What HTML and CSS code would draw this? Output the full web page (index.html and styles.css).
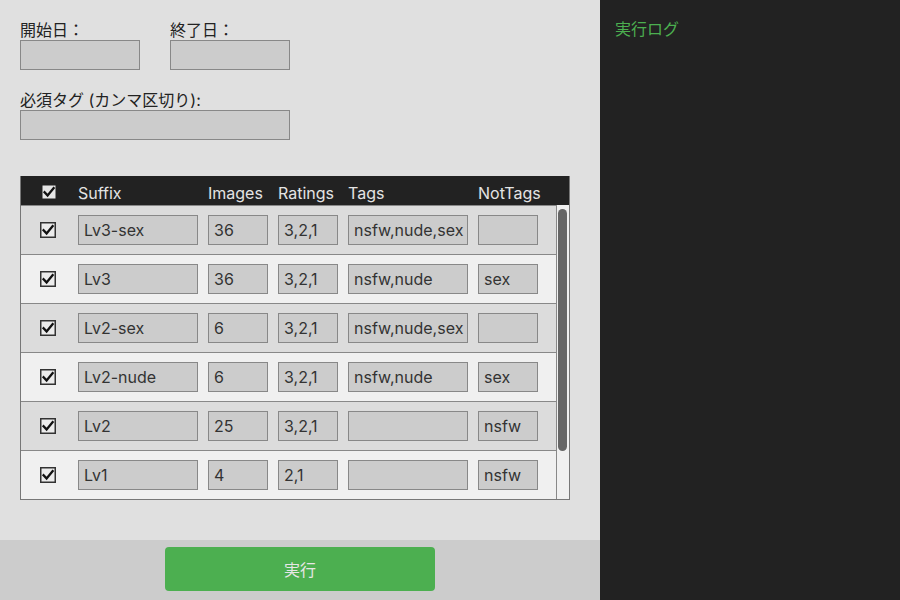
FILE: index.html
```html
<!DOCTYPE html>
<html lang="ja">
<head>
<meta charset="utf-8">
<title>実行</title>
<link rel="stylesheet" href="styles.css">
</head>
<body>
<div class="app">
  <div class="main">
    <div class="content">
      <div class="date-row">
        <div class="field"><div class="label">開始日：</div><div class="input w120"></div></div>
        <div class="field"><div class="label">終了日：</div><div class="input w120"></div></div>
      </div>
      <div class="field"><div class="label">必須タグ (カンマ区切り):</div><div class="input w270"></div></div>

      <div class="table">
        <div class="thead">
          <span class="cb"><svg viewBox="0 0 16 16" width="16" height="16"><rect x="0.75" y="0.75" width="14.5" height="14.5" fill="#e6e6e6" stroke="#222" stroke-width="1.5"/><path d="M3.6 8.2 L6.6 11.4 L12.6 4.2" fill="none" stroke="#111" stroke-width="2.3" stroke-linecap="square"/></svg></span>
          <span class="th c-suffix">Suffix</span>
          <span class="th c-num">Images</span>
          <span class="th c-num">Ratings</span>
          <span class="th c-tags">Tags</span>
          <span class="th c-num">NotTags</span>
        </div>
        <div class="tbody-wrap">
          <div class="tbody">
            <div class="tr odd">
              <span class="cb"><svg viewBox="0 0 16 16" width="16" height="16"><rect x="0.75" y="0.75" width="14.5" height="14.5" fill="#ececec" stroke="#333" stroke-width="1.5"/><path d="M3.6 8.2 L6.6 11.4 L12.6 4.2" fill="none" stroke="#111" stroke-width="2.3" stroke-linecap="square"/></svg></span>
              <span class="input c-suffix">Lv3-sex</span><span class="input c-num">36</span><span class="input c-num">3,2,1</span><span class="input c-tags">nsfw,nude,sex</span><span class="input c-num"></span>
            </div>
            <div class="tr even">
              <span class="cb"><svg viewBox="0 0 16 16" width="16" height="16"><rect x="0.75" y="0.75" width="14.5" height="14.5" fill="#ececec" stroke="#333" stroke-width="1.5"/><path d="M3.6 8.2 L6.6 11.4 L12.6 4.2" fill="none" stroke="#111" stroke-width="2.3" stroke-linecap="square"/></svg></span>
              <span class="input c-suffix">Lv3</span><span class="input c-num">36</span><span class="input c-num">3,2,1</span><span class="input c-tags">nsfw,nude</span><span class="input c-num">sex</span>
            </div>
            <div class="tr odd">
              <span class="cb"><svg viewBox="0 0 16 16" width="16" height="16"><rect x="0.75" y="0.75" width="14.5" height="14.5" fill="#ececec" stroke="#333" stroke-width="1.5"/><path d="M3.6 8.2 L6.6 11.4 L12.6 4.2" fill="none" stroke="#111" stroke-width="2.3" stroke-linecap="square"/></svg></span>
              <span class="input c-suffix">Lv2-sex</span><span class="input c-num">6</span><span class="input c-num">3,2,1</span><span class="input c-tags">nsfw,nude,sex</span><span class="input c-num"></span>
            </div>
            <div class="tr even">
              <span class="cb"><svg viewBox="0 0 16 16" width="16" height="16"><rect x="0.75" y="0.75" width="14.5" height="14.5" fill="#ececec" stroke="#333" stroke-width="1.5"/><path d="M3.6 8.2 L6.6 11.4 L12.6 4.2" fill="none" stroke="#111" stroke-width="2.3" stroke-linecap="square"/></svg></span>
              <span class="input c-suffix">Lv2-nude</span><span class="input c-num">6</span><span class="input c-num">3,2,1</span><span class="input c-tags">nsfw,nude</span><span class="input c-num">sex</span>
            </div>
            <div class="tr odd">
              <span class="cb"><svg viewBox="0 0 16 16" width="16" height="16"><rect x="0.75" y="0.75" width="14.5" height="14.5" fill="#ececec" stroke="#333" stroke-width="1.5"/><path d="M3.6 8.2 L6.6 11.4 L12.6 4.2" fill="none" stroke="#111" stroke-width="2.3" stroke-linecap="square"/></svg></span>
              <span class="input c-suffix">Lv2</span><span class="input c-num">25</span><span class="input c-num">3,2,1</span><span class="input c-tags"></span><span class="input c-num">nsfw</span>
            </div>
            <div class="tr even">
              <span class="cb"><svg viewBox="0 0 16 16" width="16" height="16"><rect x="0.75" y="0.75" width="14.5" height="14.5" fill="#ececec" stroke="#333" stroke-width="1.5"/><path d="M3.6 8.2 L6.6 11.4 L12.6 4.2" fill="none" stroke="#111" stroke-width="2.3" stroke-linecap="square"/></svg></span>
              <span class="input c-suffix">Lv1</span><span class="input c-num">4</span><span class="input c-num">2,1</span><span class="input c-tags"></span><span class="input c-num">nsfw</span>
            </div>
          </div>
          <div class="scrollbar"><div class="thumb"></div></div>
        </div>
      </div>
    </div>
    <div class="footer"><button class="run">実行</button></div>
  </div>
  <div class="log">
    <div class="log-title">実行ログ</div>
  </div>
</div>
</body>
</html>
```

FILE: styles.css
```css
* { box-sizing: border-box; }
html, body { margin: 0; padding: 0; }
body {
  font-family: Inter, "Noto Sans CJK JP", sans-serif;
  font-size: 16px;
  color: #222;
  background: #e0e0e0;
}
.app { display: flex; width: 900px; height: 600px; overflow: hidden; }
.main { width: 600px; display: flex; flex-direction: column; background: #e0e0e0; }
.content { flex: 1; padding: 20px 20px 0 20px; }
.date-row { display: flex; gap: 30px; margin-bottom: 20px; }
.field { display: flex; flex-direction: column; }
.label { height: 20px; line-height: 20px; font-size: 16px; color: #222; }
.input {
  display: block;
  height: 30px;
  line-height: 28px;
  background: #cccccc;
  border: 1px solid #888;
  padding: 0 5px;
  color: #333;
  font-size: 16px;
  white-space: nowrap;
  overflow: hidden;
}
.w120 { width: 120px; }
.w270 { width: 270px; }

.table {
  margin-top: 36px;
  width: 550px;
  border: 1px solid #777;
  border-top: none;
}
.thead {
  height: 29px;
  background: #222;
  display: flex;
  align-items: center;
  padding-left: 20px;
  color: #e4e4e4;
  font-size: 16px;
}
.thead .cb { margin-right: 21px; margin-top: 3px; }
.th { display: block; padding-top: 4px; }
.cb { width: 16px; height: 16px; display: block; flex: none; }
.cb svg { display: block; }
.c-suffix { width: 120px; margin-right: 10px; flex: none; }
.c-num { width: 60px; margin-right: 10px; flex: none; }
.c-tags { width: 120px; margin-right: 10px; flex: none; }

.tbody-wrap { display: flex; height: 294px; }
.tbody { flex: 1; }
.tr {
  display: flex;
  align-items: center;
  height: 49px;
  padding: 9px 0 9px 19px;
  border-top: 1px solid #888;
}
.tr .cb { margin-right: 22px; }
.tr.odd { background: #dcdcdc; }
.tr.even { background: #f0f0f0; }
.scrollbar {
  width: 13px;
  flex: none;
  background: #f0f0f0;
  border-left: 1px solid #888;
  padding: 4px 0 0 1px;
}
.thumb {
  width: 9px;
  height: 242px;
  background: #666;
  border-radius: 5px;
}

.footer {
  height: 60px;
  background: #cccccc;
  display: flex;
  justify-content: center;
  align-items: flex-start;
  padding-top: 7px;
}
.run {
  width: 270px;
  height: 44px;
  background: #4caf50;
  border: none;
  border-radius: 4px;
  color: #e6e6e6;
  font-family: Inter, "Noto Sans CJK JP", sans-serif;
  font-size: 16px;
}
.log {
  width: 300px;
  background: #222;
  padding: 19px 15px;
}
.log-title { color: #4caf50; font-size: 16px; line-height: 20px; }
```
